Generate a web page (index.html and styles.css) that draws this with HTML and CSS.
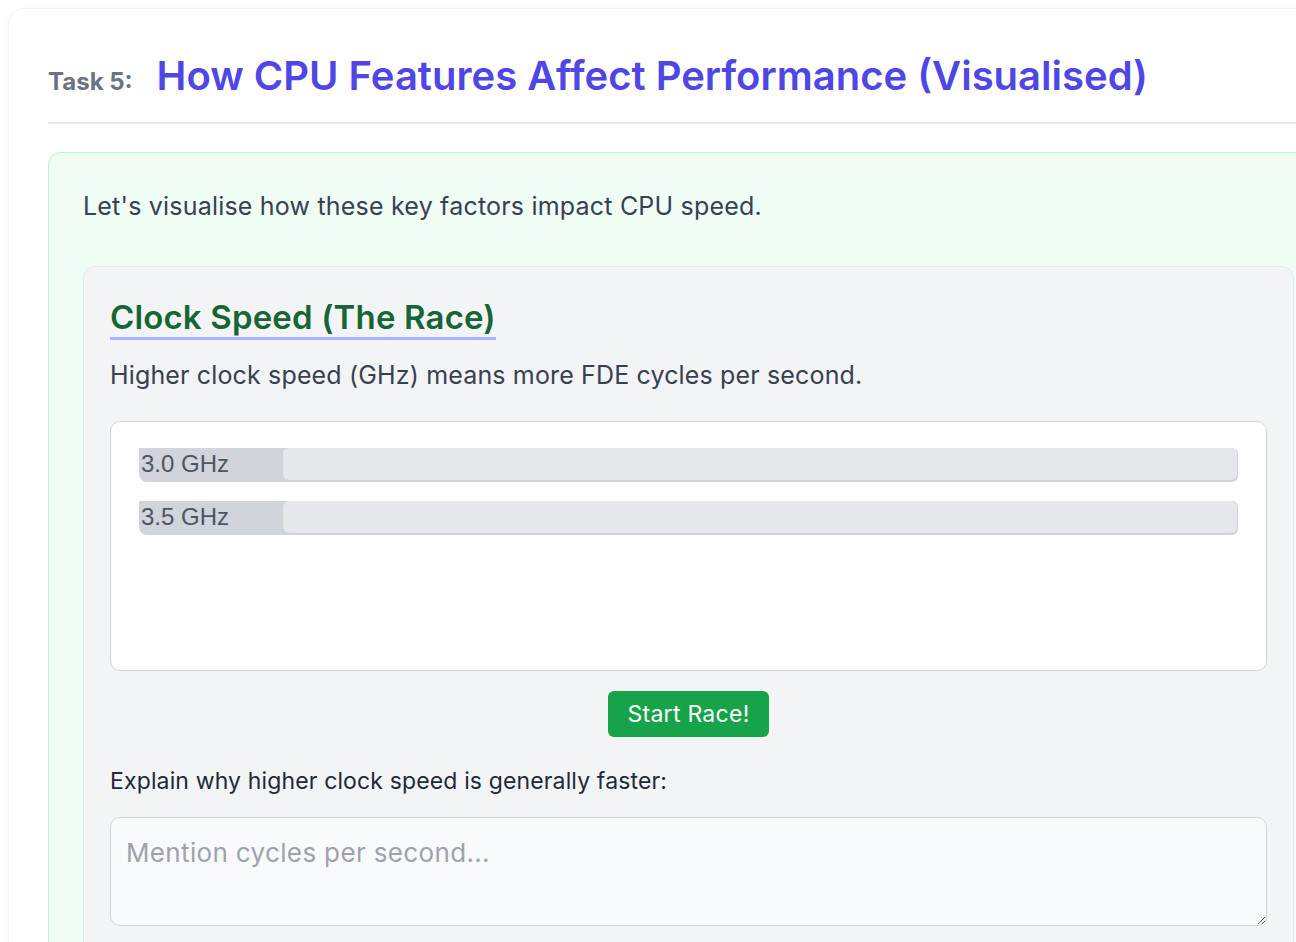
FILE: index.html
```html
<!DOCTYPE html>
<html lang="en">
<head>
<meta charset="utf-8">
<title>Task 5</title>
<link rel="stylesheet" href="styles.css">
</head>
<body>
<div class="page">
  <section class="task-card">
    <header class="task-header">
      <span class="task-label">Task 5:</span>
      <h1 class="task-title">How CPU Features Affect Performance (Visualised)</h1>
    </header>
    <div class="green-box">
      <p class="intro">Let's visualise how these key factors impact CPU speed.</p>
      <div class="sub-card">
        <h2 class="sub-title">Clock Speed (The Race)</h2>
        <p class="sub-desc">Higher clock speed (GHz) means more FDE cycles per second.</p>
        <div class="race-box">
          <div class="track">
            <span class="car">3.0 GHz</span>
            <span class="lane"></span>
          </div>
          <div class="track">
            <span class="car">3.5 GHz</span>
            <span class="lane"></span>
          </div>
        </div>
        <div class="btn-row">
          <button class="btn-start">Start Race!</button>
        </div>
        <label class="explain" for="ans">Explain why higher clock speed is generally faster:</label>
        <textarea id="ans" class="answer" placeholder="Mention cycles per second..."></textarea>
      </div>
    </div>
  </section>
</div>
</body>
</html>
```

FILE: styles.css
```css
html, body {
  margin: 0;
  padding: 0;
  overflow: hidden;
  background: #ffffff;
}
body {
  font-family: Inter, "Noto Sans", sans-serif;
  width: 1296px;
  height: 942px;
}
.page {
  padding: 8px 0 0 8px;
}
.task-card {
  width: 1340px;
  box-sizing: border-box;
  background: #fff;
  border: 1px solid #f3f4f6;
  border-radius: 16px;
  box-shadow: 0 1px 4px rgba(0,0,0,0.04);
  padding: 43px 0 0 39px;
  height: 980px;
}
.task-header {
  display: flex;
  align-items: baseline;
  gap: 24px;
  padding-bottom: 22px;
  border-bottom: 2px solid #e5e7eb;
  margin-right: -10px;
}
.task-label {
  font-size: 24px;
  font-weight: 700;
  color: #6b7280;
}
.task-title {
  margin: 0;
  font-size: 40px;
  font-weight: 600;
  color: #4f46e5;
  line-height: 1.2;
}
.green-box {
  margin-top: 28px;
  background: #f0fdf4;
  border: 1px solid #bbf7d0;
  border-radius: 12px;
  padding: 35px 34px 40px 34px;
}
.intro {
  margin: 0 0 42px 0;
  font-size: 25px;
  letter-spacing: 0.2px;
  line-height: 36px;
  color: #374151;
}
.sub-card {
  background: #f3f4f6;
  border: 1px solid #e5e7eb;
  border-radius: 12px;
  padding: 30px 26px 30px 26px;
  width: 1157px;
}
.sub-title {
  display: inline-block;
  margin: 0;
  font-size: 33px;
  letter-spacing: 0.15px;
  font-weight: 600;
  color: #166534;
  line-height: 40px;
  border-bottom: 3px solid #a5b4fc;
}
.sub-desc {
  margin: 17px 0 28px 0;
  font-size: 25px;
  letter-spacing: 0.15px;
  line-height: 36px;
  color: #374151;
}
.race-box {
  box-sizing: border-box;
  height: 250px;
  background: #fff;
  border: 1px solid #d1d5db;
  border-radius: 10px;
  padding: 26px 28px;
  display: flex;
  flex-direction: column;
  gap: 19px;
}
.track {
  display: flex;
  height: 34px;
  background: #d1d5db;
  border-radius: 0 6px 6px 8px;
}
.car {
  width: 144px;
  font-family: "Liberation Sans", Arial, sans-serif;
  font-size: 24px;
  line-height: 32px;
  color: #4b5563;
  padding-left: 2px;
  box-sizing: border-box;
}
.lane {
  flex: 1;
  background: #e5e7eb;
  border-radius: 6px;
  margin: 0 1px 2px 0;
}
.btn-row {
  display: flex;
  justify-content: center;
  margin-top: 20px;
}
.btn-start {
  width: 161px;
  height: 46px;
  background: #16a34a;
  color: #fff;
  border: none;
  border-radius: 6px;
  font-family: Inter, sans-serif;
  font-size: 23px;
  letter-spacing: 0.27px;
}
.explain {
  display: block;
  margin-top: 26px;
  font-size: 23px;
  letter-spacing: 0.14px;
  line-height: 36px;
  color: #1f2937;
}
.answer {
  display: block;
  box-sizing: border-box;
  margin-top: 18px;
  width: 100%;
  height: 109px;
  background: #f9fafb;
  border: 1px solid #d1d5db;
  border-radius: 10px;
  padding: 19px 15px 17px 15px;
  font-family: Inter, sans-serif;
  font-size: 26px;
  letter-spacing: 0.35px;
  color: #374151;
}
.answer::placeholder {
  color: #9ca3af;
}
```
